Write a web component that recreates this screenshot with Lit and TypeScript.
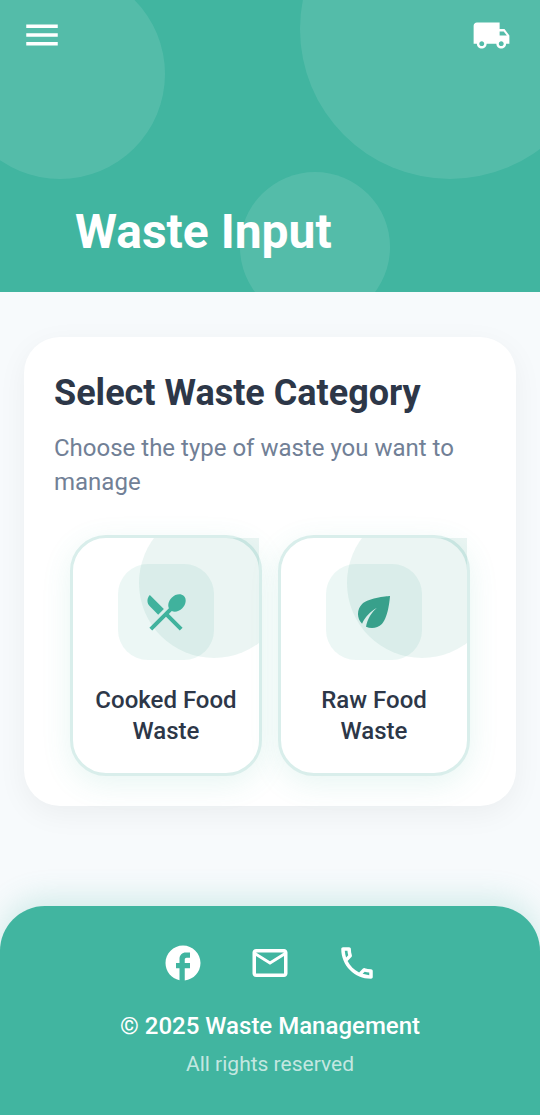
import { LitElement, html, css, svg } from "lit";
import { customElement, property } from "lit/decorators.js";

const ICONS: Record<string, string> = {
  menu: "M3 18h18v-2H3v2zm0-5h18v-2H3v2zm0-7v2h18V6H3z",
  truck:
    "M20 8h-3V4H3c-1.100 0-2 .9-2 2v11h2c0 1.660 1.340 3 3 3s3-1.340 3-3h6c0 1.660 1.340 3 3 3s3-1.340 3-3h2v-5l-3-4zM6 18.500c-.83 0-1.500-.67-1.500-1.500s.67-1.500 1.500-1.500 1.500.67 1.500 1.500-.67 1.500-1.500 1.500zm13.500-9l1.960 2.500H17V9.500h2.500zm-1.500 9c-.83 0-1.500-.67-1.500-1.500s.67-1.500 1.500-1.500 1.500.67 1.500 1.500-.67 1.500-1.500 1.500z",
  utensils:
    "M8.100 13.340l2.830-2.830L3.910 3.500c-1.560 1.560-1.560 4.090 0 5.660l4.190 4.180zm6.780-1.810c1.530.71 3.680.21 5.270-1.380 1.910-1.910 2.280-4.650.81-6.120-1.460-1.460-4.200-1.100-6.120.81-1.590 1.590-2.090 3.740-1.380 5.270L3.700 19.870l1.410 1.410L12 14.410l6.880 6.880 1.410-1.410L13.410 13l1.470-1.470z",
  leaf: "M6.050 8.050c-2.730 2.730-2.730 7.150-.02 9.880 1.470-3.400 4.090-6.240 7.360-7.930-2.770 2.340-4.710 5.610-5.390 9.320 2.600 1.230 5.800.78 7.950-1.370C19.430 14.470 20 4 20 4S9.530 4.570 6.050 8.050z",
  facebook:
    "M22 12c0-5.520-4.480-10-10-10S2 6.480 2 12c0 4.840 3.440 8.870 8 9.800V15H8v-3h2V9.500C10 7.570 11.570 6 13.500 6H16v3h-2c-.55 0-1 .45-1 1v2h3v3h-3v6.950c5.050-.5 9-4.760 9-9.950z",
  mail: "M22 6c0-1.100-.9-2-2-2H4c-1.100 0-2 .9-2 2v12c0 1.100.9 2 2 2h16c1.100 0 2-.9 2-2V6zm-2 0l-8 5-8-5h16zm0 12H4V8l8 5 8-5v10z",
  phone:
    "M6.540 5c.06.89.21 1.760.45 2.590l-1.200 1.200c-.41-1.200-.67-2.470-.76-3.790h1.510m9.860 12.020c.85.24 1.720.39 2.600.45v1.490c-1.320-.09-2.590-.35-3.800-.75l1.200-1.190M7.500 3H4c-.55 0-1 .45-1 1 0 9.390 7.610 17 17 17 .55 0 1-.45 1-1v-3.490c0-.55-.45-1-1-1-1.240 0-2.450-.2-3.570-.57-.1-.04-.21-.05-.31-.05-.26 0-.51.1-.71.29l-2.200 2.200c-2.830-1.450-5.150-3.760-6.590-6.590l2.200-2.200c.28-.28.36-.67.25-1.020C8.700 6.450 8.500 5.250 8.500 4c0-.55-.45-1-1-1z",
};

const icon = (name: string) => html`<svg viewBox="0 0 24 24" aria-hidden="true">
  ${svg`<path d=${ICONS[name]} />`}
</svg>`;

@customElement("category-tile")
export class CategoryTile extends LitElement {
  @property() label = "";
  @property() icon = "";

  static styles = css`
    :host {
      display: grid;
    }
    .tile {
      position: relative;
      display: flex;
      flex-direction: column;
      align-items: center;
      gap: 25px;
      margin: 0;
      padding: 26px 12px;
      border: 3px solid #d9eeeb;
      border-radius: 36px;
      background: #fff;
      box-shadow: 0 8px 30px rgba(65, 181, 160, 0.12);
      color: #2d3748;
      font: 500 24px/31px Roboto, sans-serif;
      text-align: center;
      cursor: pointer;
    }
    .decor {
      position: absolute;
      inset: 0;
      overflow: hidden;
      pointer-events: none;
    }
    .decor::before {
      content: "";
      position: absolute;
      top: -30px;
      right: -30px;
      width: 150px;
      height: 150px;
      border-radius: 50%;
      background: rgba(56, 161, 140, 0.1);
    }
    .badge {
      display: grid;
      place-items: center;
      width: 96px;
      height: 96px;
      border-radius: 30px;
      background: rgba(65, 181, 160, 0.1);
      color: #41b5a0;
    }
    .leaf {
      color: #38a18c;
    }
    svg {
      width: 48px;
      height: 48px;
      fill: currentColor;
    }
  `;

  render() {
    return html`<button class="tile" type="button">
      <span class="decor"></span>
      <span class="badge ${this.icon}">${icon(this.icon)}</span>
      <span>${this.label}</span>
    </button>`;
  }
}

@customElement("app-root")
export class AppRoot extends LitElement {
  static styles = css`
    :host {
      display: flex;
      flex-direction: column;
      min-height: 100vh;
      background: #f7fafc;
      color: #2d3748;
      font-family: Roboto, sans-serif;
    }
    * {
      box-sizing: border-box;
    }
    h1,
    h2,
    p {
      margin: 0;
    }
    svg {
      display: block;
      width: 42px;
      height: 42px;
      fill: currentColor;
    }
    .header {
      position: relative;
      overflow: hidden;
      display: flex;
      flex-direction: column;
      gap: 146px;
      padding: 14px 21px 30px;
      background: #41b5a0;
      color: #fff;
    }
    .bubble {
      position: absolute;
      border-radius: 50%;
      background: rgba(255, 255, 255, 0.1);
    }
    .left {
      top: -31px;
      left: -45px;
      width: 210px;
      height: 210px;
    }
    .right {
      top: -121px;
      right: -60px;
      width: 300px;
      height: 300px;
    }
    .low {
      bottom: -30px;
      right: 150px;
      width: 150px;
      height: 150px;
    }
    .bar {
      position: relative;
      display: flex;
      align-items: center;
      justify-content: space-between;
      padding-right: 8px;
    }
    .action {
      display: block;
      padding: 0;
      border: 0;
      background: none;
      color: inherit;
      cursor: pointer;
    }
    .truck svg {
      width: 39px;
      height: 39px;
    }
    .title {
      position: relative;
      padding-left: 54px;
      font-size: 48px;
      line-height: 60px;
      font-weight: 700;
    }
    .main {
      flex: 1;
      padding: 45px 24px;
    }
    .card {
      padding: 30px;
      border-radius: 36px;
      background: #fff;
      box-shadow: 0 8px 30px rgba(0, 0, 0, 0.05);
    }
    .heading {
      font-size: 36px;
      line-height: 52px;
      font-weight: 700;
    }
    .hint {
      padding: 12px 0 36px;
      color: #718096;
      font-size: 24px;
      line-height: 34px;
    }
    .tiles {
      display: grid;
      grid-template-columns: 1fr 1fr;
      gap: 16px;
      padding: 0 16px;
    }
    .footer {
      display: flex;
      flex-direction: column;
      align-items: center;
      padding: 36px 24px;
      border-radius: 45px 45px 0 0;
      background: #41b5a0;
      box-shadow: 0 -8px 30px rgba(65, 181, 160, 0.2);
      color: #fff;
      text-align: center;
    }
    .links {
      display: flex;
      gap: 45px;
      padding-bottom: 24px;
    }
    .link {
      color: inherit;
    }
    .owner {
      font-size: 24px;
      line-height: 36px;
      font-weight: 500;
    }
    .rights {
      padding-top: 6px;
      color: rgba(255, 255, 255, 0.7);
      font-size: 21px;
      line-height: 29px;
    }
  `;

  render() {
    return html`
      <header class="header">
        <span class="bubble left"></span>
        <span class="bubble right"></span>
        <span class="bubble low"></span>
        <div class="bar">
          <button class="action" type="button" aria-label="Menu">${icon("menu")}</button>
          <button class="action truck" type="button" aria-label="Collection">${icon("truck")}</button>
        </div>
        <h1 class="title">Waste Input</h1>
      </header>
      <main class="main">
        <section class="card">
          <h2 class="heading">Select Waste Category</h2>
          <p class="hint">Choose the type of waste you want to manage</p>
          <div class="tiles">
            <category-tile icon="utensils" label="Cooked Food Waste"></category-tile>
            <category-tile icon="leaf" label="Raw Food Waste"></category-tile>
          </div>
        </section>
      </main>
      <footer class="footer">
        <nav class="links">
          <a class="link" href="#facebook" aria-label="Facebook">${icon("facebook")}</a>
          <a class="link" href="#mail" aria-label="Email">${icon("mail")}</a>
          <a class="link" href="#phone" aria-label="Phone">${icon("phone")}</a>
        </nav>
        <p class="owner">© 2025 Waste Management</p>
        <p class="rights">All rights reserved</p>
      </footer>
    `;
  }
}
